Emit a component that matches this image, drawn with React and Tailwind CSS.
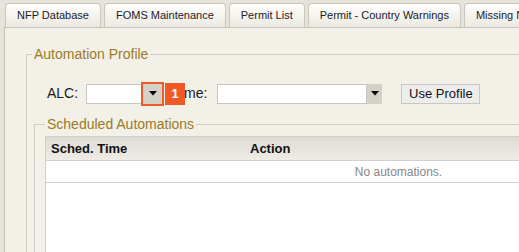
import React from "react";

const tabs = [
  "NFP Database",
  "FOMS Maintenance",
  "Permit List",
  "Permit - Country Warnings",
  "Missing NFP Records",
];

const Arrow = () => (
  <svg width="8" height="5" viewBox="0 0 8 5">
    <polygon points="0,0 8,0 4,4.5" fill="#000" />
  </svg>
);

const App = () => {
  return (
    <div className="h-[252px] w-[519px] overflow-hidden bg-[#e6e3db] font-['Liberation_Sans',Arial,sans-serif]">
      <div className="flex w-[900px] gap-[3px] pl-[5px] pt-[3px]">
        {tabs.map((t) => (
          <div
            key={t}
            className="flex h-[24px] items-center rounded-t-[4px] border border-b-0 border-[#c9c6bd] bg-gradient-to-b from-[#fefefb] to-[#ebe9e1] px-[11px] text-[11px] text-[#1a1a2a]"
          >
            {t}
          </div>
        ))}
      </div>

      <div className="ml-[4px] h-[300px] w-[900px] border-l border-t border-[#c6c3ba] bg-[#f3f0e7] pl-[21px] pt-[18px]">
        <fieldset className="border border-[#cfccc6] pb-[20px] pl-[5px]">
          <legend className="px-[2px] text-[14px] leading-[16px] text-[#9c7a26]">
            Automation Profile
          </legend>

          <div className="mt-[21px] flex items-center pl-[15px] text-[14px] text-[#1a1a1a]">
            <span>ALC:</span>
            <div className="relative ml-[8px] flex h-[20px]">
              <div className="h-[20px] w-[57px] border border-[#c8c6c0] bg-white" />
              <div className="flex h-[20px] w-[19px] items-center justify-center bg-[#d4d1c9] ring-2 ring-[#f05a24]">
                <Arrow />
              </div>
              <div className="absolute left-full top-[-1px] ml-[3px] flex h-[22px] w-[20px] items-center justify-center bg-[#f05a24] text-[13px] font-bold text-white">
                1
              </div>
            </div>
            <span className="ml-[4px]">Name:</span>
            <div className="ml-[10px] flex h-[20px]">
              <div className="h-[20px] w-[150px] border border-[#c8c6c0] bg-white" />
              <div className="flex h-[20px] w-[15px] items-center justify-center bg-[#d4d1c9]">
                <Arrow />
              </div>
            </div>
            <button className="ml-[19px] h-[20px] w-[79px] border border-[#c6c6c6] bg-[#ededed] text-[13px] leading-[18px] text-[#111]">
              Use Profile
            </button>
          </div>

          <fieldset className="ml-[2px] mt-[12px] border border-[#cfccc6] pl-[10px]">
            <legend className="px-[2px] text-[14px] leading-[16px] text-[#9c7a26]">
              Scheduled Automations
            </legend>
            <div className="mt-[4px] h-[200px] w-[706px] border-l border-t border-[#cfcfcf] bg-white">
              <div className="flex h-[24px] items-center border-b border-[#d2d2d2] bg-gradient-to-b from-[#dedbd4] to-[#efece6] text-[13px] font-bold text-[#111]">
                <div className="w-[199px] pl-[5px]">Sched. Time</div>
                <div className="pl-[5px]">Action</div>
              </div>
              <div className="flex h-[22px] items-center justify-center border-b border-[#d2d2d2] text-[12px] text-[#888]">
                No automations.
              </div>
            </div>
          </fieldset>
        </fieldset>
      </div>
    </div>
  );
};

export default App;
